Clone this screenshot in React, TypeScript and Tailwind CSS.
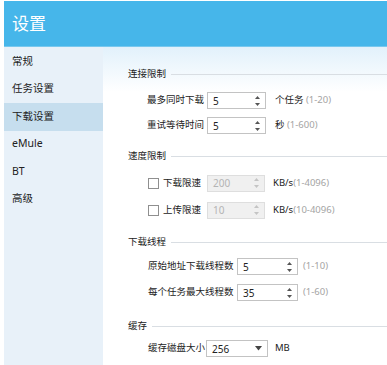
const MENU = ['常规', '任务设置', '下载设置', 'eMule', 'BT', '高级'];

function Spinner({ disabled = false }: { disabled?: boolean }) {
  const c = disabled ? '#c4c4c4' : '#555';
  return (
    <svg width="7" height="12" viewBox="0 0 7 12" className="shrink-0">
      <path d="M3.5 1 L6 4 L1 4 Z" fill={c} />
      <path d="M3.5 11 L6 8 L1 8 Z" fill={c} />
    </svg>
  );
}

function NumberBox({ value, width, disabled = false }: { value: string; width: string; disabled?: boolean }) {
  return (
    <div
      className={`${width} h-[17px] shrink-0 flex items-center justify-between pl-[5px] pr-[4px] border text-[10px] ${
        disabled ? 'bg-[#f0f0f0] border-[#dedede] text-[#b4b4b4]' : 'bg-white border-[#c3c3c3] text-[#222]'
      }`}
    >
      <span className="leading-none">{value}</span>
      <Spinner disabled={disabled} />
    </div>
  );
}

function SectionTitle({ text, className = '' }: { text: string; className?: string }) {
  return (
    <div className={`flex items-center h-[16px] ${className}`}>
      <span className="text-[#222] whitespace-nowrap">{text}</span>
      <div className="flex-1 h-px bg-[#d9dee3] ml-[5px]" />
    </div>
  );
}

function Range({ text }: { text: string }) {
  return <span className="text-[#a4a4a4]">{text}</span>;
}

export default function App() {
  return (
    <div
      className="w-[387px] h-[365px] bg-white pl-[4px] pt-px flex flex-col overflow-hidden text-[9.5px]"
      style={{ fontFamily: '"Noto Sans", "Noto Sans CJK SC", sans-serif' }}
    >
      {/* Header */}
      <div className="h-[46px] shrink-0 bg-[#46b6ea] border-b border-[#78c8ee] flex items-center pl-[8px]">
        <span className="text-white text-[17px] leading-none">设置</span>
      </div>

      <div className="flex flex-1 min-h-0">
        {/* Sidebar */}
        <div className="w-[99px] shrink-0 bg-[#e8f1f9] pt-[1px] flex flex-col">
          {MENU.map((m) => (
            <div
              key={m}
              className={`h-[27.5px] flex items-center pl-[8px] text-[10.5px] text-[#222] ${
                m === '下载设置' ? 'bg-[#c6deee]' : ''
              }`}
            >
              {m}
            </div>
          ))}
        </div>

        {/* Content */}
        <div className="flex-1 flex flex-col pl-[25px] pt-[19px] bg-[linear-gradient(to_bottom,#e2f1fb,#ffffff_45px)] text-[#222] whitespace-nowrap">
          <SectionTitle text="连接限制" />
          <div className="flex flex-col gap-[8px] mt-[10px] pl-[19px]">
            <div className="flex items-center h-[17px]">
              <span className="w-[60px] shrink-0">最多同时下载</span>
              <NumberBox value="5" width="w-[59px]" />
              <span className="ml-[9px]">个任务 <Range text="(1-20)" /></span>
            </div>
            <div className="flex items-center h-[17px]">
              <span className="w-[60px] shrink-0">重试等待时间</span>
              <NumberBox value="5" width="w-[59px]" />
              <span className="ml-[9px]">秒 <Range text="(1-600)" /></span>
            </div>
          </div>

          <SectionTitle text="速度限制" className="mt-[14px]" />
          <div className="flex flex-col gap-[9px] mt-[10px] pl-[20px]">
            {[
              ['下载限速', '200', '(1-4096)'],
              ['上传限速', '10', '(10-4096)'],
            ].map(([label, val, range]) => (
              <div key={label} className="flex items-center h-[18px]">
                <div className="w-[11px] h-[11px] shrink-0 border border-[#8f8f8f] bg-white" />
                <span className="ml-[4px] w-[44px] shrink-0">{label}</span>
                <NumberBox value={val} width="w-[58px]" disabled />
                <span className="ml-[8px]">
                  KB/s<Range text={range} />
                </span>
              </div>
            ))}
          </div>

          <SectionTitle text="下载线程" className="mt-[15px]" />
          <div className="flex flex-col gap-[9px] mt-[8px] pl-[20px]">
            <div className="flex items-center h-[17px]">
              <span className="w-[89px] shrink-0">原始地址下载线程数</span>
              <NumberBox value="5" width="w-[61px]" />
              <span className="ml-[5px]">
                <Range text="(1-10)" />
              </span>
            </div>
            <div className="flex items-center h-[17px]">
              <span className="w-[89px] shrink-0">每个任务最大线程数</span>
              <NumberBox value="35" width="w-[61px]" />
              <span className="ml-[5px]">
                <Range text="(1-60)" />
              </span>
            </div>
          </div>

          <SectionTitle text="缓存" className="mt-[17px]" />
          <div className="flex items-center h-[17px] mt-[6px] pl-[20px]">
            <span className="w-[58px] shrink-0">缓存磁盘大小</span>
            <div className="w-[62px] h-[17px] shrink-0 flex items-center justify-between pl-[5px] pr-[5px] border border-[#c3c3c3] bg-white text-[#222] text-[10px]">
              <span className="leading-none">256</span>
              <svg width="7" height="5" viewBox="0 0 7 5">
                <path d="M0 0 L7 0 L3.5 4.5 Z" fill="#444" />
              </svg>
            </div>
            <span className="ml-[7px]">MB</span>
          </div>
        </div>
      </div>
    </div>
  );
}
